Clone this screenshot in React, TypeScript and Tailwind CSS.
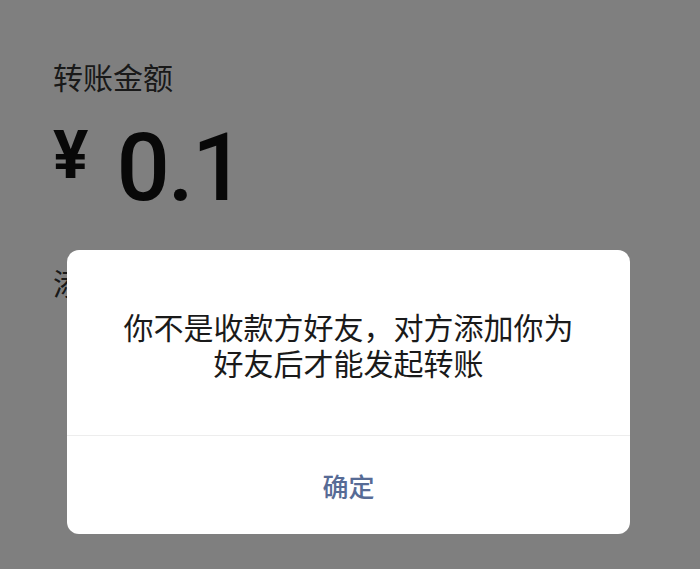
export default function App() {
  return (
    <div className="relative h-[569px] w-full overflow-hidden bg-white font-['Noto_Sans_CJK_SC',sans-serif]">
      <div className="pl-[53px] pt-[56px]">
        <p className="text-[30px] leading-[40px] text-[#333]">转账金额</p>
        <div className="mt-[25px] flex items-start font-['Roboto','Noto_Sans_CJK_SC',sans-serif] text-[#111]">
          <span className="mt-[2px] text-[66px] font-bold leading-none">¥</span>
          <span className="ml-[28px] text-[94px] font-medium leading-none tracking-[-2px]">0.1</span>
        </div>
        <p className="mt-[47px] text-[30px] leading-[40px] text-[#333]">添加转账说明</p>
      </div>

      <div className="absolute inset-0 bg-black/50" />

      <div className="absolute left-[67px] top-[250px] w-[563px] overflow-hidden rounded-[12px] bg-white">
        <div className="whitespace-nowrap px-[20px] pb-[55px] pt-[58px] text-center text-[30px] leading-[36px] text-[#1a1a1a]">
          <p>你不是收款方好友，对方添加你为</p>
          <p>好友后才能发起转账</p>
        </div>
        <div className="flex h-[99px] items-center justify-center border-t border-[#ededed] text-[26px] font-medium text-[#576b95]">
          确定
        </div>
      </div>
    </div>
  );
}
